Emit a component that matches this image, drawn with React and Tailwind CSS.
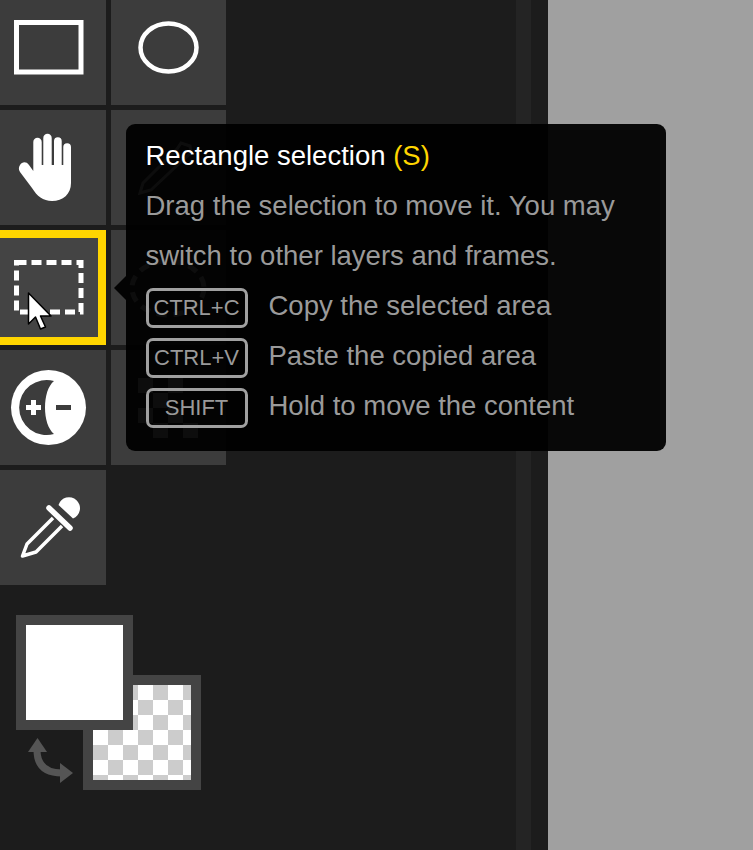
const Icon = ({ box, children }) => (
  <svg viewBox={box} className="block w-full h-full" fill="none">{children}</svg>
);

const Tool = ({ selected, children }) => (
  <div className={selected ? "w-[115px] h-[115px] bg-[#444444] shadow-[inset_0_0_0_8px_#ffd500]" : "w-[115px] h-[115px] bg-[#3c3c3c]"}>
    {children}
  </div>
);

const Key = ({ children }) => (
  <span className="flex items-center justify-center w-[102px] h-[40px] mt-[7px] mr-[21px] border-[3px] border-[#a0a0a0] rounded-[7px] text-[22px] leading-none">{children}</span>
);

const Row = ({ k, children }) => (
  <div className="flex items-start h-[50px]"><Key>{k}</Key><span>{children}</span></div>
);

export default function App() {
  return (
    <div className="relative flex w-[753px] h-[850px] overflow-hidden bg-[#1c1c1c] font-['Liberation_Sans',Arial,sans-serif]">
      <aside className="w-[516px] bg-[#1c1c1c]">
        <div className="grid grid-cols-[115px_115px] gap-[5px] -mt-[10px] -ml-[9px] w-[235px]">
          <Tool>
            <Icon box="-9 -10 115 115">
              <rect x="16.500" y="22.500" width="64.500" height="49.500" stroke="#fff" strokeWidth="5" />
            </Icon>
          </Tool>
          <Tool>
            <Icon box="111 -10 115 115">
              <ellipse cx="168.500" cy="47.500" rx="28" ry="24" stroke="#fff" strokeWidth="4.500" />
            </Icon>
          </Tool>
          <Tool>
            <Icon box="-9 110 115 115">
              <path d="M20 165C22 162 26 161 29 165L33.300 171V142A4.200 4.200 0 0 1 41.700 142V165H43.300V138A4.200 4.200 0 0 1 51.700 138V165H54V141A3.850 3.850 0 0 1 61.700 141V165H63.300V147A3.850 3.850 0 0 1 71 147V183C71 194 63 201 52 201C43 201 37 196 32 188L20 172C18.500 170 18.500 167 20 165Z" fill="#fff" />
            </Icon>
          </Tool>
          <Tool>
            <Icon box="111 110 115 115">
              <path d="M140 193L143 183L177 149L181 143L190 146L191 153L185 158L151 190Z" stroke="#fff" strokeWidth="3" />
            </Icon>
          </Tool>
          <Tool selected>
            <Icon box="-9 230 115 115">
              <rect x="16.500" y="262.500" width="64.500" height="49.500" stroke="#fff" strokeWidth="5" strokeDasharray="10 5" />
              <path d="M28.500 293V324L35.500 317L40.500 329L45.500 327L40.500 316H51Z" fill="#fff" stroke="#000" strokeWidth="1.500" strokeLinejoin="round" />
            </Icon>
          </Tool>
          <Tool>
            <Icon box="111 230 115 115">
              <ellipse cx="168" cy="288" rx="36" ry="27" stroke="#fff" strokeWidth="5" strokeDasharray="10 7" />
            </Icon>
          </Tool>
          <Tool>
            <Icon box="-9 350 115 115">
              <circle cx="48.500" cy="407.500" r="37.500" fill="#fff" />
              <path d="M54 381A27.500 27.500 0 1 0 54 434C48 429 45 419 45 407.500C45 396 48 386 54 381Z" fill="#3c3c3c" />
              <path d="M26 407.500H41M33.500 400V415" stroke="#fff" strokeWidth="5" />
              <path d="M56 407.500H71" stroke="#3c3c3c" strokeWidth="5" />
            </Icon>
          </Tool>
          <Tool>
            <Icon box="111 350 115 115">
              <path d="M138 378h15v15h-15zM168 378h15v15h-15zM153 393h15v15h-15zM138 408h15v15h-15zM168 408h15v15h-15zM153 423h15v15h-15zM183 423h15v15h-15z" fill="#fff" />
            </Icon>
          </Tool>
          <Tool>
            <Icon box="-9 470 115 115">
              <path d="M58.500 505A11 11 0 1 1 73 518.500Z" fill="#fff" />
              <path d="M49 508L70 528" stroke="#fff" strokeWidth="5.500" strokeLinecap="round" />
              <path d="M53 518L27 544L22.500 556L36 552L62 526" stroke="#fff" strokeWidth="3.500" strokeLinejoin="round" />
            </Icon>
          </Tool>
        </div>

        <div className="relative w-[201px] mt-[30px] ml-[16px]">
          <div className="relative z-10 w-[117px] h-[115px] border-[10px] border-[#444444] bg-white" />
          <div className="ml-[67px] -mt-[55px] w-[118px] h-[115px] border-[10px] border-[#444444] bg-[repeating-conic-gradient(#ffffff_0_25%,#cccccc_0_50%)] bg-[length:30px_30px]" />
          <svg viewBox="26 735 50 50" className="absolute left-[10px] top-[120px] w-[50px] h-[50px]" fill="none">
            <path d="M37 750C37 765 45 773 62 773" stroke="#555555" strokeWidth="7" />
            <path d="M37.500 738L47 752H28Z" fill="#555555" />
            <path d="M73 773L60 763V783Z" fill="#555555" />
          </svg>
        </div>
      </aside>
      <div className="w-[15px] bg-[#242424]" />
      <div className="w-[17px] bg-[#1c1c1c]" />
      <main className="flex-1 bg-[#a0a0a0]" />

      <div className="absolute left-[126px] top-[124px] w-[540px] pt-[7px] pb-[20px] pl-[19.500px] pr-[20px] rounded-[9px] bg-black/95 text-[27.500px] leading-[50px] text-[#9a9a9a]">
        <span className="absolute -left-[12px] top-[152px] border-y-[12px] border-r-[12px] border-y-transparent border-r-black/95" />
        <div className="text-white">Rectangle selection <span className="text-[#ffd500]">(S)</span></div>
        <div>Drag the selection to move it. You may<br />switch to other layers and frames.</div>
        <Row k="CTRL+C">Copy the selected area</Row>
        <Row k="CTRL+V">Paste the copied area</Row>
        <Row k="SHIFT">Hold to move the content</Row>
      </div>
    </div>
  );
}
